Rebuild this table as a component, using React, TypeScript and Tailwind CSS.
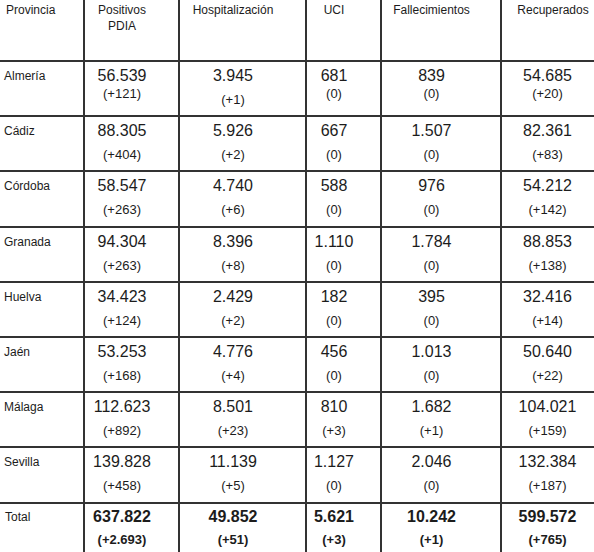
type Row = {
  name: string;
  values: [string, string][];
  h: string;
  tight?: boolean;
};

const rows: Row[] = [
  { name: 'Almería', h: 'h-[55px]', tight: true, values: [['56.539', '(+121)'], ['3.945', '(+1)'], ['681', '(0)'], ['839', '(0)'], ['54.685', '(+20)']] },
  { name: 'Cádiz', h: 'h-[55px]', values: [['88.305', '(+404)'], ['5.926', '(+2)'], ['667', '(0)'], ['1.507', '(0)'], ['82.361', '(+83)']] },
  { name: 'Córdoba', h: 'h-[56px]', values: [['58.547', '(+263)'], ['4.740', '(+6)'], ['588', '(0)'], ['976', '(0)'], ['54.212', '(+142)']] },
  { name: 'Granada', h: 'h-[55px]', values: [['94.304', '(+263)'], ['8.396', '(+8)'], ['1.110', '(0)'], ['1.784', '(0)'], ['88.853', '(+138)']] },
  { name: 'Huelva', h: 'h-[55px]', values: [['34.423', '(+124)'], ['2.429', '(+2)'], ['182', '(0)'], ['395', '(0)'], ['32.416', '(+14)']] },
  { name: 'Jaén', h: 'h-[55px]', values: [['53.253', '(+168)'], ['4.776', '(+4)'], ['456', '(0)'], ['1.013', '(0)'], ['50.640', '(+22)']] },
  { name: 'Málaga', h: 'h-[55px]', values: [['112.623', '(+892)'], ['8.501', '(+23)'], ['810', '(+3)'], ['1.682', '(+1)'], ['104.021', '(+159)']] },
  { name: 'Sevilla', h: 'h-[56px]', values: [['139.828', '(+458)'], ['11.139', '(+5)'], ['1.127', '(0)'], ['2.046', '(0)'], ['132.384', '(+187)']] },
];

const total: [string, string][] = [
  ['637.822', '(+2.693)'],
  ['49.852', '(+51)'],
  ['5.621', '(+3)'],
  ['10.242', '(+1)'],
  ['599.572', '(+765)'],
];

const headers = [['Positivos', 'PDIA'], ['Hospitalización'], ['UCI'], ['Fallecimientos'], ['Recuperados']];

// last column runs past the right edge of the capture
const grid = 'grid grid-cols-[83px_95px_127px_75px_120px_112px]';

export default function App() {
  return (
    <div
      className="w-[594px] h-[552px] overflow-hidden bg-white text-[#1c1c1c]"
      style={{ fontFamily: '"Liberation Sans", Arial, sans-serif' }}
    >
      {/* header */}
      <div className={`${grid} h-[62px]`}>
        <div className="border-b-2 border-[#333] pl-[6px] pt-[2px] text-[12px] leading-[16px]">Provincia</div>
        {headers.map((lines, i) => (
          <div
            key={i}
            className={`border-b-2 border-l-2 border-[#333] pt-[2px] text-center text-[12px] leading-[16px] ${
              i === 4 ? 'pr-[8px]' : 'pr-[19px]'
            }`}
          >
            {lines.map((l) => (
              <div key={l}>{l}</div>
            ))}
          </div>
        ))}
      </div>

      {rows.map((r) => (
        <div key={r.name} className={`${grid} ${r.h}`}>
          <div className="border-b-2 border-[#333] pl-[4px] pt-[5px] text-[12px] leading-[18px]">{r.name}</div>
          {r.values.map(([v, d], i) => (
            <div key={i} className="flex flex-col items-center border-b-2 border-l-2 border-[#333] pr-[19px] pt-[5px]">
              <div className="text-[16px] leading-[18px]">{v}</div>
              <div className={`text-[13px] leading-[18px] ${r.tight && i !== 1 ? '' : 'mt-[6px]'}`}>{d}</div>
            </div>
          ))}
        </div>
      ))}

      {/* total */}
      <div className={`${grid} h-[48px]`}>
        <div className="pl-[5px] pt-[4px] text-[12px] leading-[18px]">Total</div>
        {total.map(([v, d], i) => (
          <div key={i} className="flex flex-col items-center border-l-2 border-[#333] pr-[19px] pt-[4px] font-bold">
            <div className="text-[16px] leading-[18px]">{v}</div>
            <div className="mt-[5px] text-[13px] leading-[18px]">{d}</div>
          </div>
        ))}
      </div>
    </div>
  );
}
